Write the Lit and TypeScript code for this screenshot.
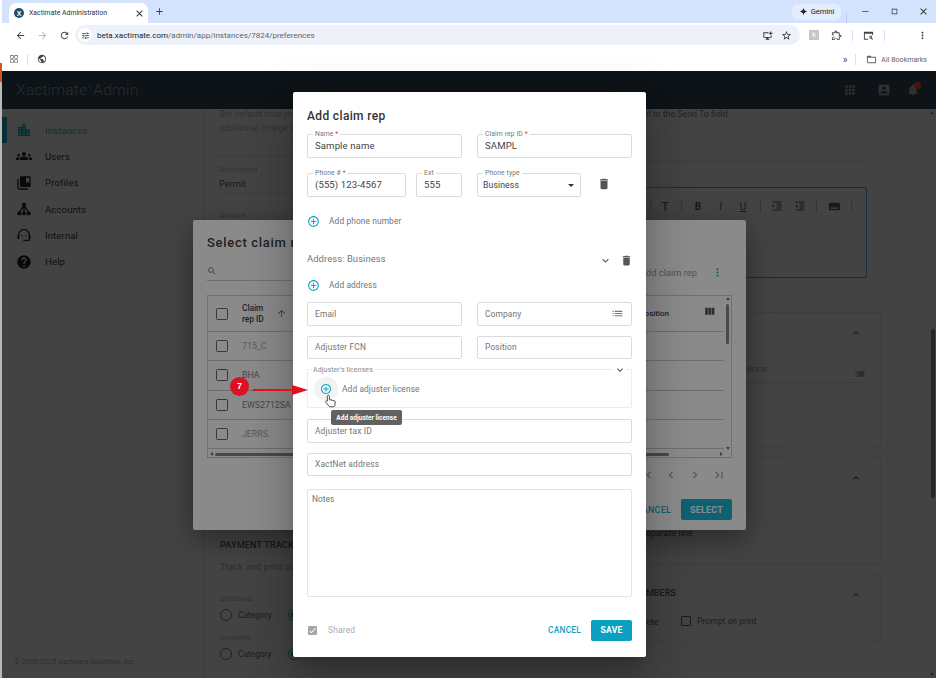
import { LitElement, html, css } from 'lit';
import { customElement } from 'lit/decorators.js';

const P = {
  trash: 'M6 19c0 1.1.9 2 2 2h8c1.1 0 2-.9 2-2V7H6v12zM19 4h-3.5l-1-1h-5l-1 1H5v2h14V4z',
  more: 'M16.59 8.59L12 13.17 7.41 8.59 6 10l6 6 6-6z',
  less: 'M12 8l-6 6 1.41 1.41L12 10.83l4.59 4.58L18 14z',
  add: 'M13 7h-2v4H7v2h4v4h2v-4h4v-2h-4V7zm-1-5C6.48 2 2 6.48 2 12s4.48 10 10 10 10-4.48 10-10S17.52 2 12 2zm0 18c-4.41 0-8-3.59-8-8s3.59-8 8-8 8 3.59 8 8-3.59 8-8 8z',
  list: 'M3 13h2v-2H3v2zm0 4h2v-2H3v2zm0-8h2V7H3v2zm4 4h14v-2H7v2zm0 4h14v-2H7v2zM7 7v2h14V7H7z',
  search: 'M15.5 14h-.79l-.28-.27A6.471 6.471 0 0 0 16 9.5 6.5 6.5 0 1 0 9.5 16c1.61 0 3.09-.59 4.23-1.57l.27.28v.79l5 4.99L20.49 19l-4.99-5zm-6 0C7.01 14 5 11.99 5 9.5S7.01 5 9.5 5 14 7.01 14 9.5 11.99 14 9.5 14z',
  apps: 'M4 8h4V4H4v4zm6 12h4v-4h-4v4zm-6 0h4v-4H4v4zm0-6h4v-4H4v4zm6 0h4v-4h-4v4zm6-10v4h4V4h-4zm-6 4h4V4h-4v4zm6 6h4v-4h-4v4zm0 6h4v-4h-4v4z',
  account: 'M3 5v14c0 1.1.89 2 2 2h14c1.1 0 2-.9 2-2V5c0-1.1-.9-2-2-2H5c-1.11 0-2 .9-2 2zm12 4c0 1.66-1.34 3-3 3s-3-1.34-3-3 1.34-3 3-3 3 1.34 3 3zm-9 8c0-2 4-3.1 6-3.1s6 1.1 6 3.1v1H6v-1z',
  bell: 'M12 22c1.1 0 2-.9 2-2h-4c0 1.1.89 2 2 2zm6-6v-5c0-3.07-1.64-5.64-4.5-6.32V4c0-.83-.67-1.5-1.5-1.5s-1.5.67-1.5 1.5v.68C7.63 5.36 6 7.92 6 11v5l-2 2v1h16v-1l-2-2z',
  city: 'M15 11V5l-3-3-3 3v2H3v14h18V11h-6zm-8 8H5v-2h2v2zm0-4H5v-2h2v2zm0-4H5V9h2v2zm6 8h-2v-2h2v2zm0-4h-2v-2h2v2zm0-4h-2V9h2v2zm0-4h-2V5h2v2zm6 12h-2v-2h2v2zm0-4h-2v-2h2v2z',
  groups: 'M12 12.75c1.63 0 3.07.39 4.24.9 1.08.48 1.76 1.56 1.76 2.73V18H6v-1.61c0-1.18.68-2.26 1.76-2.73 1.17-.52 2.61-.91 4.24-.91zM4 13c1.1 0 2-.9 2-2s-.9-2-2-2-2 .9-2 2 .9 2 2 2zm1.13 1.1c-.37-.06-.74-.1-1.13-.1-.99 0-1.93.21-2.78.58C.48 14.9 0 15.62 0 16.43V18h4.5v-1.61c0-.83.23-1.61.63-2.29zM20 13c1.1 0 2-.9 2-2s-.9-2-2-2-2 .9-2 2 .9 2 2 2zm4 3.43c0-.81-.48-1.53-1.22-1.85-.85-.37-1.79-.58-2.78-.58-.39 0-.76.04-1.13.1.4.68.63 1.46.63 2.29V18H24v-1.57zM12 6c1.66 0 3 1.34 3 3s-1.34 3-3 3-3-1.34-3-3 1.34-3 3-3z',
  profiles: 'M4 6H2v14c0 1.1.9 2 2 2h14v-2H4V6zM20 2H8c-1.1 0-2 .9-2 2v12c0 1.1.9 2 2 2h12c1.1 0 2-.9 2-2V4c0-1.1-.9-2-2-2zm0 10l-2.5-1.5L15 12V4h5v8z',
  accounts: 'M12 2.5a3.2 3.2 0 1 1 0 6.4 3.2 3.2 0 0 1 0-6.4zM5 15.5a3.2 3.2 0 1 1 0 6.4 3.2 3.2 0 0 1 0-6.4zM12 15.5a3.2 3.2 0 1 1 0 6.4 3.2 3.2 0 0 1 0-6.4zM19 15.5a3.2 3.2 0 1 1 0 6.4 3.2 3.2 0 0 1 0-6.4zM11 8h2v8h-2zM9.6 8.4l1.7 1-4.6 7-1.7-1zM14.4 8.4l-1.7 1 4.6 7 1.7-1z',
  internal: 'M21 12.22C21 6.73 16.74 3 12 3c-4.69 0-9 3.65-9 9.28-.6.34-1 .98-1 1.72v2c0 1.1.9 2 2 2h1v-6.1c0-3.87 3.13-7 7-7s7 3.13 7 7V19h-8v2h8c1.1 0 2-.9 2-2v-1.22c.59-.31 1-.92 1-1.62v-2.3c0-.7-.41-1.31-1-1.64zM9 12a1 1 0 1 1 0 2 1 1 0 0 1 0-2zm6 0a1 1 0 1 1 0 2 1 1 0 0 1 0-2z',
  help: 'M12 2C6.48 2 2 6.48 2 12s4.48 10 10 10 10-4.48 10-10S17.52 2 12 2zm1 17h-2v-2h2v2zm2.07-7.75l-.9.92C13.45 12.9 13 13.5 13 15h-2v-.5c0-1.1.45-2.1 1.17-2.83l1.24-1.26c.37-.36.59-.86.59-1.41 0-1.1-.9-2-2-2s-2 .9-2 2H8c0-2.21 1.79-4 4-4s4 1.79 4 4c0 .88-.36 1.68-.93 2.25z',
  columns: 'M10 18h5V5h-5v13zm-6 0h5V5H4v13zM16 5v13h5V5h-5z',
  dots: 'M12 8c1.1 0 2-.9 2-2s-.9-2-2-2-2 .9-2 2 .9 2 2 2zm0 2c-1.1 0-2 .9-2 2s.9 2 2 2 2-.9 2-2-.9-2-2-2zm0 6c-1.1 0-2 .9-2 2s.9 2 2 2 2-.9 2-2-.9-2-2-2z',
  up: 'M4 12l1.41 1.41L11 7.83V20h2V7.83l5.58 5.59L20 12l-8-8-8 8z',
  left: 'M15.41 7.41L14 6l-6 6 6 6 1.41-1.41L10.83 12z',
  right: 'M10 6L8.59 7.41 13.17 12l-4.58 4.59L10 18l6-6z',
  first: 'M18.41 16.59L13.82 12l4.59-4.59L17 6l-6 6 6 6zM6 6h2v12H6z',
  last: 'M5.59 7.41L10.18 12l-4.59 4.59L7 18l6-6-6-6zM16 6h2v12h-2z',
  indent: 'M3 21h18v-2H3v2zM3 8v8l4-4-4-4zm8 9h10v-2H11v2zM3 3v2h18V3H3zm8 6h10V7H11v2zm0 4h10v-2H11v2z',
  outdent: 'M11 17h10v-2H11v2zm-8-5l4 4V8l-4 4zm0 9h18v-2H3v2zM3 3v2h18V3H3zm8 6h10V7H11v2zm0 4h10v-2H11v2z',
  keyboard: 'M20 5H4c-1.1 0-2 .9-2 2v10c0 1.1.9 2 2 2h16c1.1 0 2-.9 2-2V7c0-1.1-.9-2-2-2zM5 14h14v2H5v-2z',
  back: 'M20 11H7.83l5.59-5.59L12 4l-8 8 8 8 1.41-1.41L7.83 13H20v-2z',
  forward: 'M12 4l-1.41 1.41L16.17 11H4v2h12.17l-5.58 5.59L12 20l8-8z',
  reload: 'M17.65 6.35A7.95 7.95 0 0 0 12 4C7.58 4 4 7.58 4 12s3.58 8 8 8c3.73 0 6.84-2.55 7.73-6h-2.08A5.99 5.99 0 0 1 12 18c-3.31 0-6-2.69-6-6s2.69-6 6-6c1.66 0 3.14.69 4.22 1.78L13 11h7V4l-2.35 2.35z',
  star: 'M22 9.24l-7.19-.62L12 2 9.19 8.63 2 9.24l5.46 4.73L5.82 21 12 17.27 18.18 21l-1.63-7.03L22 9.24zM12 15.4l-3.76 2.27 1-4.28-3.32-2.88 4.38-.38L12 6.1l1.71 4.04 4.38.38-3.32 2.88 1 4.28L12 15.4z',
  puzzle: 'M20.5 11H19V7c0-1.1-.9-2-2-2h-4V3.5a2.5 2.5 0 0 0-5 0V5H4c-1.1 0-2 .9-2 2v3.8h1.5a2.7 2.7 0 0 1 0 5.4H2V20c0 1.1.9 2 2 2h3.8v-1.5a2.7 2.7 0 0 1 5.4 0V22H17c1.1 0 2-.9 2-2v-4h1.5a2.5 2.5 0 0 0 0-5zm0 3H17v6h-2.1a4.7 4.7 0 0 0-8.8 0H4v-2.1a4.7 4.7 0 0 0 0-8.8V7h6V3.5a.5.5 0 0 1 1 0V7h6v6h3.5a.5.5 0 0 1 0 1z',
  folder: 'M20 6h-8l-2-2H4c-1.1 0-2 .9-2 2v12c0 1.1.9 2 2 2h16c1.1 0 2-.9 2-2V8c0-1.1-.9-2-2-2zm0 12H4V8h16v10z',
  spark: 'M12 2c.6 5.6 4.4 9.4 10 10-5.6.6-9.4 4.4-10 10-.6-5.6-4.4-9.4-10-10 5.6-.6 9.4-4.4 10-10z',
  close: 'M19 6.41L17.59 5 12 10.59 6.41 5 5 6.41 10.59 12 5 17.59 6.41 19 12 13.41 17.59 19 19 17.59 13.41 12z',
  plus: 'M19 13h-6v6h-2v-6H5v-2h6V5h2v6h6v2z',
  globe: 'M12 2C6.48 2 2 6.48 2 12s4.48 10 10 10 10-4.48 10-10S17.52 2 12 2zm-1 17.9A8 8 0 0 1 4.2 10.2L9 15v1c0 1.1.9 2 2 2v1.9zm6.9-2.5c-.3-.8-1-1.4-1.9-1.4h-1v-3c0-.55-.45-1-1-1H8v-2h2c.55 0 1-.45 1-1V7h2c1.1 0 2-.9 2-2v-.4a8 8 0 0 1 2.9 12.8z',
  tune: 'M3 17v2h6v-2H3zM3 5v2h10V5H3zm10 16v-2h8v-2h-8v-2h-2v6h2zM7 9v2H3v2h4v2h2V9H7zm14 4v-2H11v2h10zm-6-4h2V7h4V5h-4V3h-2v6z',
  install: 'M3 5h11v2H5v8h14v-3h2v3c0 1.1-.9 2-2 2h-5v2h2v2H8v-2h2v-2H5c-1.1 0-2-.9-2-2zM18 3h2v3h3v2h-3v3h-2V8h-3V6h3z',
  tabsearch: 'M3 4h18c.55 0 1 .45 1 1v6h-2V8H4v11h7v2H3c-.55 0-1-.45-1-1V5c0-.55.45-1 1-1zm13.5 8a3.5 3.5 0 0 1 2.9 5.45L22 20l-1.4 1.4-2.6-2.55A3.5 3.5 0 1 1 16.5 12zm0 2a1.5 1.5 0 1 0 0 3 1.5 1.5 0 0 0 0-3z',
};

const ic = (d: string, size = 14, cls = '') =>
  html`<svg class=${cls} width=${size} height=${size} viewBox="0 0 24 24" fill="currentColor"><path d=${d}></path></svg>`;

const NAV = [
  { label: 'Instances', d: P.city, active: true },
  { label: 'Users', d: P.groups },
  { label: 'Profiles', d: P.profiles },
  { label: 'Accounts', d: P.accounts },
  { label: 'Internal', d: P.internal },
  { label: 'Help', d: P.help },
];

const REPS = ['715_C', 'BHA', 'EWS2712SA', 'JERRS.'];

@customElement('app-root')
export class AppRoot extends LitElement {
  static styles = css`
    :host {
      display: block;
      width: 936px;
      height: 678px;
      overflow: hidden;
      font-family: Roboto, sans-serif;
      background: #fff;
    }
    svg { display: block; flex: none; }
    .screen { display: flex; height: 678px; }
    .sliver {
      width: 2px;
      flex: none;
      display: flex;
      flex-direction: column;
      background: #fff;
    }
    .sliver .gap { height: 63px; }
    .sliver .orange { height: 19px; background: #c9591e; }
    .sliver .rest { flex: 1; background: #b9b9b9; }
    .window { flex: 1; min-width: 0; display: flex; flex-direction: column; }

    /* browser chrome */
    .chrome { color: #3c4043; }
    .tabs {
      height: 23px;
      background: #d3e3fd;
      display: flex;
      align-items: flex-end;
      padding-left: 7px;
    }
    .tab {
      width: 139px;
      height: 20px;
      background: #fff;
      border-radius: 7px 7px 0 0;
      display: flex;
      align-items: center;
      padding: 0 3px 0 5px;
      box-sizing: border-box;
      font-size: 6.9px;
      color: #303134;
    }
    .favicon {
      width: 10px;
      height: 10px;
      border-radius: 50%;
      background: #1d4f6e;
      color: #fff;
      font: bold 7px 'Liberation Sans', sans-serif;
      display: flex;
      align-items: center;
      justify-content: center;
      margin-right: 5px;
      flex: none;
    }
    .tab span.t { flex: 1; white-space: nowrap; }
    .newtab { margin: 0 0 1px 6px; color: #444; align-self: center; padding-top: 1px; }
    .tabs .grow { flex: 1; }
    .gemini {
      align-self: center;
      height: 16px;
      width: 49px;
      border-radius: 6px;
      background: #e3edfd;
      display: flex;
      align-items: center;
      justify-content: center;
      gap: 3px;
      font-size: 7.6px;
      color: #222;
    }
    .vsep { width: 1px; height: 11px; background: #b5cdf5; flex: none; }
    .winbtns {
      align-self: center;
      display: flex;
      align-items: center;
      gap: 18px;
      padding: 0 7px 0 13px;
      color: #333;
    }
    .toolbar {
      height: 24px;
      background: #fff;
      display: flex;
      align-items: center;
      padding-left: 7px;
    }
    .navbtn { width: 22px; display: flex; justify-content: center; color: #444; }
    .navbtn.off { color: #b5b8bb; }
    .omni {
      width: 725px;
      height: 20px;
      background: #edf2fa;
      border-radius: 10px;
      display: flex;
      align-items: center;
      padding: 0 8px 0 3px;
      box-sizing: border-box;
      flex: none;
    }
    .tune {
      width: 14px;
      height: 14px;
      border-radius: 50%;
      background: #fff;
      display: flex;
      align-items: center;
      justify-content: center;
      margin-right: 5px;
    }
    .url { flex: 1; font-size: 8px; color: #5f6368; white-space: nowrap; }
    .url b { font-weight: 400; color: #202124; }
    .omni-icons { display: flex; gap: 8px; align-items: center; color: #333; }
    .tools { display: flex; align-items: center; margin-left: 9px; color: #444; }
    .ext {
      width: 10px;
      height: 10px;
      background: #c6c6c6;
      margin-right: 12px;
      color: #fff;
      font-size: 7px;
      text-align: center;
      line-height: 10px;
    }
    .tools .vsep { background: #d4e2f8; }
    .tools .a { margin-left: 10px; }
    .tools .b { margin: 0 10px; }
    .tools .c { margin-left: 32px; }
    .bookmarks {
      height: 24px;
      background: #fff;
      display: flex;
      align-items: center;
      padding-left: 7px;
      font-size: 7.1px;
      color: #5f6368;
    }
    .bookmarks .vsep { background: #d4e2f8; margin: 0 9px 0 8px; }
    .bookmarks .last { margin: 0 10px 0 8px; }
    .bookmarks .grow { flex: 1; }
    .ic-grid { color: #555; }
    .ic-globe { color: #444; }
    .chev2 { font-size: 10px; color: #555; }
    .bm-all { display: flex; align-items: center; gap: 4px; margin-right: 9px; white-space: nowrap; }

    /* underlying app, colours are chosen to land right under the two scrims */
    .app { position: relative; flex: 1; min-height: 0; display: flex; flex-direction: column; background: #e8e8e8; }
    .header {
      height: 38px;
      flex: none;
      background: #304152;
      display: flex;
      align-items: center;
      padding: 0 16px 0 14px;
      color: #8a9ba5;
      font-size: 15.5px;
      font-weight: 300;
      letter-spacing: .2px;
    }
    .header sup { font-size: 5px; margin: 0 1px; }
    .header .grow { flex: 1; }
    .head-icons { display: flex; align-items: center; gap: 14px; color: #aaa; }
    .head-icons .acc { margin-left: 6px; }
    .bell { position: relative; margin-left: 1px; }
    .bell i {
      position: absolute;
      width: 7px;
      height: 7px;
      right: -1px;
      top: -1px;
      border-radius: 50%;
      background: #ff4632;
    }
    .shell { flex: 1; min-height: 0; display: flex; }
    .sidebar {
      width: 202px;
      flex: none;
      box-sizing: border-box;
      border-right: 1px solid #ccc;
      padding-top: 8px;
      display: flex;
      flex-direction: column;
    }
    .nav {
      height: 26.3px;
      display: flex;
      align-items: center;
      padding-left: 14px;
      gap: 13px;
      font-size: 9.6px;
      color: #333;
      letter-spacing: .1px;
      flex: none;
    }
    .nav svg { color: #222; }
    .nav.active { color: #1fa0b8; box-shadow: inset 5px 0 0 #1fa0b8; }
    .nav.active svg { color: #1fa0b8; }
    .copy { margin-top: auto; padding: 0 0 12px 12px; font-size: 7.2px; color: #999; letter-spacing: .05px; }
    .content { flex: 1; min-width: 0; padding: 0 47px 0 15px; font-size: 9.2px; color: #555; }
    .top { height: 193px; box-sizing: border-box; }
    .intro { height: 14px; display: flex; justify-content: space-between; align-items: center; color: #aaa; position: relative; top: -2px; font-size: 9px; }
    .intro .r { margin-right: 151px; color: #777; font-size: 8.8px; }
    .topgrid { display: grid; grid-template-columns: 316px 1fr; gap: 8px; margin-right: 14px; }
    .mini { font-size: 7.6px; color: #aaa; }
    .leftcol { padding-top: 19px; }
    .leftcol .rule { border-bottom: 1px solid #ccc; }
    .leftcol .desc { margin-top: 8px; }
    .leftcol .val { font-size: 9.2px; color: #555; margin: 4px 0; padding-bottom: 4px; border-bottom: 1px solid #ccc; }
    .leftcol .amt { margin-top: 17px; }
    .rightcol { padding-top: 24px; }
    .rightcol .rule { border-bottom: 1px solid #ccc; }
    .editor {
      margin-top: 25px;
      height: 91px;
      border: 1px solid #3ab0c6;
      border-radius: 2px;
      box-sizing: border-box;
    }
    .edit-tools {
      display: flex;
      justify-content: flex-end;
      align-items: center;
      height: 36px;
      padding-right: 14px;
      color: #555;
      gap: 10.5px;
      font-size: 11px;
    }
    .edit-tools b, .edit-tools i, .edit-tools u { width: 12px; text-align: center; font-size: 10px; }
    .edit-tools .tt { font-size: 13px; margin-right: 1px; }
    .edit-tools .sep { width: 1px; height: 12px; background: #bbb; }
    .columns { display: grid; grid-template-columns: 1fr 321px; gap: 8px; margin-top: 10px; margin-left: -14px; }
    .col { display: flex; flex-direction: column; gap: 10px; }
    .card { border: 1px solid #d4d4d4; border-radius: 2px; box-sizing: border-box; position: relative; }
    .card .cv { position: absolute; right: 18px; color: #555; }
    .leftcard { margin-top: 218px; padding: 10px 15px; border: none; height: 130px; }
    .sect { font-size: 9.1px; font-weight: 500; color: #555; letter-spacing: .15px; white-space: nowrap; }
    .muted { color: #999; font-size: 9.2px; letter-spacing: .15px; margin: 11px 0 22px; white-space: nowrap; }
    .mini.tight { margin-bottom: 6px; }
    .radios { display: flex; align-items: center; font-size: 8.4px; color: #666; margin-bottom: 12px; }
    .radio { width: 10px; height: 10px; border: 1px solid #777; border-radius: 50%; margin-right: 6px; flex: none; }
    .radio.on { border-color: #1fa0b8; background: radial-gradient(circle, #1fa0b8 0 3px, transparent 3.5px); margin-left: 16px; margin-right: 0; }
    .c2 { height: 135px; }
    .c2 .cv { top: 14px; }
    .c2 .f { position: absolute; left: 14px; right: 14px; top: 50px; height: 19px; border-bottom: 1px solid #ccc; color: #999; font-size: 9.2px; display: flex; justify-content: space-between; }
    .c2 .f span { margin-left: 172px; }
    .c2 .f svg { margin-top: 5px; color: #555; }
    .c3 { height: 107px; }
    .c3 .cv { top: 14px; }
    .c3 .t { position: absolute; left: 85px; top: 70px; white-space: nowrap; color: #666; font-size: 9px; }
    .c4 { height: 68px; }
    .c4 .cv { top: 14px; }
    .c4 .t1 { position: absolute; left: 85px; top: 13px; white-space: nowrap; font-weight: 500; font-size: 9px; color: #555; }
    .c4 .t0 { position: absolute; left: 85px; top: 41px; color: #666; white-space: nowrap; }
    .c4 .t2 { position: absolute; left: 120px; top: 41px; display: flex; align-items: center; gap: 6px; white-space: nowrap; color: #666; font-size: 8.6px; }
    .box { width: 8px; height: 8px; border: 1px solid #666; border-radius: 1px; flex: none; }
    .pagescroll { width: 8px; flex: none; position: relative; }
    .pagescroll .thumb { position: absolute; left: 3px; right: 1px; top: 220px; height: 169px; background: #888; border-radius: 2px; }
    .tri { position: absolute; width: 0; height: 0; border: 2px solid transparent; }
    .tri.u { border-top: none; border-bottom: 3px solid #777; }
    .tri.d { border-bottom: none; border-top: 3px solid #777; }
    .tri.l { border-left: none; border-right: 3px solid #777; }
    .tri.r { border-right: none; border-left: 3px solid #777; }
    .pagescroll .u { top: 2px; left: 2px; }
    .pagescroll .d { bottom: 2px; left: 2px; }

    /* scrims and dialogs */
    .scrim { position: absolute; inset: 0; background: rgba(0, 0, 0, .46); }
    .select {
      position: absolute;
      left: 191px;
      top: 149px;
      width: 553px;
      height: 310px;
      background: #fff;
      border-radius: 2px;
      box-sizing: border-box;
      padding: 14px;
      display: flex;
      flex-direction: column;
      box-shadow: 0 9px 30px rgba(0, 0, 0, .4);
    }
    .select h2 { margin: 0; font-size: 13px; font-weight: 500; color: #404040; letter-spacing: .7px; line-height: 18px; white-space: nowrap; flex: none; }
    .select .searchrow {
      margin-top: 9px;
      height: 20px;
      flex: none;
      display: flex;
      align-items: center;
      color: #777;
      border-bottom: 1px solid #ccc;
      margin-right: 440px;
      font-size: 9.5px;
      box-sizing: border-box;
    }
    .select .bar-right {
      position: absolute;
      right: 22px;
      top: 46px;
      display: flex;
      align-items: center;
      gap: 14px;
      font-size: 9.3px;
      color: #999;
    }
    .select .bar-right svg { color: #1ab4d0; }
    .table {
      margin-top: 14px;
      height: 163px;
      border: 1px solid #d0d0d0;
      box-sizing: border-box;
      display: flex;
      flex-direction: column;
      position: relative;
      flex: none;
    }
    .thead, .trow { display: flex; align-items: center; margin-right: 7px; border-bottom: 1px solid #ccc; padding-left: 8px; flex: none; box-sizing: border-box; }
    .thead { height: 36px; font-size: 8.3px; font-weight: 500; color: #3a4060; line-height: 11px; }
    .trow { height: 29.3px; font-size: 8.8px; color: #a6a6a6; }
    .trow.dark { color: #828282; }
    .cb { width: 10px; height: 10px; border: 1.5px solid #666; border-radius: 1.5px; margin-right: 14px; flex: none; }
    .thead .id { width: 34px; }
    .thead svg.sort { color: #777; margin-right: auto; }
    .thead .pos { margin-right: 34px; font-size: 8px; }
    .thead svg.colsel { margin-right: 8px; margin-top: -4px; color: #555; }
    .hscroll { position: absolute; left: 7px; right: 62px; bottom: 1px; height: 3px; background: #888; border-radius: 2px; }
    .vscroll { position: absolute; right: 2px; top: 8px; width: 3px; height: 40px; background: #888; border-radius: 2px; }
    .table .u { top: 1px; right: 1px; }
    .table .d { bottom: 7px; right: 1px; }
    .table .l { bottom: 1px; left: 2px; }
    .table .r { bottom: 1px; right: 8px; }
    .pager { display: flex; justify-content: flex-end; gap: 10px; margin-top: 10px; padding-right: 6px; color: #999; flex: none; }
    .sel-actions { margin-top: 17px; display: flex; justify-content: flex-end; align-items: center; gap: 10px; font-size: 9px; font-weight: 500; letter-spacing: .2px; color: #1ab4d0; flex: none; }
    .sel-btn { width: 51px; height: 21px; border-radius: 2px; background: #1ab4d0; color: #fff; display: flex; align-items: center; justify-content: center; font-weight: 700; }

    .dialog {
      position: absolute;
      left: 291px;
      top: 21px;
      width: 353px;
      height: 565px;
      background: #fff;
      border-radius: 2px;
      box-sizing: border-box;
      padding: 14px;
      display: flex;
      flex-direction: column;
      box-shadow: 0 11px 15px -7px rgba(0,0,0,.2), 0 24px 38px 3px rgba(0,0,0,.14), 0 9px 46px 8px rgba(0,0,0,.12);
      color: #333;
    }
    .dialog h2 { margin: 1px 0 0; height: 18px; font-size: 12px; line-height: 18px; font-weight: 500; color: #333; letter-spacing: .35px; flex: none; }
    .row { display: flex; flex: none; }
    .field {
      position: relative;
      height: 23.5px;
      border: 1px solid #dcdcdc;
      border-radius: 2px;
      box-sizing: border-box;
      display: flex;
      align-items: center;
      padding: 0 7px;
      font-size: 9.6px;
      color: #444;
      letter-spacing: .1px;
      flex: none;
    }
    .w155 { width: 155px; }
    .w99 { width: 99px; margin-right: 10px; }
    .w46 { width: 46px; margin-right: 15px; }
    .w104 { width: 104px; height: 24px; padding: 0 6px 0 5px; font-size: 8.7px; justify-content: space-between; }
    .wfull { width: 325px; }
    .mr15 { margin-right: 15px; }
    .field label {
      position: absolute;
      left: 5px;
      top: -5px;
      padding: 0 2px;
      background: #fff;
      font-size: 6.8px;
      line-height: 8px;
      color: #777;
      letter-spacing: .1px;
    }
    .field label em { color: #e53935; font-style: normal; }
    .ph { font-size: 8.4px; color: #757575; letter-spacing: .15px; justify-content: space-between; }
    .caret { width: 0; height: 0; border: 3.5px solid transparent; border-top: 3.5px solid #333; margin-top: 4px; }
    .trash { color: #555; margin: 4px 0 0 16px; }
    .adder { height: 22px; align-items: center; gap: 9px; font-size: 8.4px; color: #757575; letter-spacing: .1px; }
    .adder svg { color: #13a7c9; }
    .addr { height: 24px; align-items: center; color: #757575; font-size: 9.4px; letter-spacing: .1px; }
    .addr .txt { margin-top: -4px; }
    .addr .grow { flex: 1; }
    .addr svg { color: #555; }
    .addr .cv { margin-right: 8px; }
    .addr .tr { margin-right: -1px; }
    .lic {
      position: relative;
      width: 325px;
      height: 39px;
      border: 1px solid #ececec;
      border-radius: 2px;
      box-sizing: border-box;
      display: flex;
      align-items: center;
      flex: none;
      padding-left: 6px;
      gap: 4px;
      font-size: 8.4px;
      letter-spacing: .1px;
      color: #757575;
    }
    .lic > label { position: absolute; left: 4px; top: -4px; padding: 0 1px; background: #fff; font-size: 7px; line-height: 8px; color: #888; letter-spacing: .1px; }
    .lic .cv { position: absolute; right: 5px; top: -6px; color: #555; background: #fff; }
    .halo { width: 24px; height: 24px; border-radius: 50%; background: #f2f2f2; display: flex; align-items: center; justify-content: center; color: #13a7c9; flex: none; margin-top: 1px; }
    .lic span.tx { margin-top: 1px; }
    .tooltip {
      position: absolute;
      left: 23px;
      top: 40px;
      width: 71px;
      height: 15px;
      background: #616161;
      border-radius: 2px;
      color: #fff;
      font-size: 6.6px;
      font-weight: 700;
      display: flex;
      align-items: center;
      justify-content: center;
      letter-spacing: 0;
      white-space: nowrap;
      z-index: 2;
    }
    .cursor { position: absolute; left: 17px; top: 24px; z-index: 3; }
    .notes {
      width: 325px;
      height: 107.5px;
      border: 1px solid #e4e4e4;
      border-radius: 2px;
      box-sizing: border-box;
      padding: 4px 4px;
      font-size: 8.4px;
      color: #757575;
      flex: none;
    }
    .foot { height: 21px; align-items: center; font-size: 8.4px; }
    .shared { width: 9px; height: 9px; background: #a6a6a6; border-radius: 1px; color: #fff; margin: 0 11px 0 1px; display: flex; align-items: center; justify-content: center; }
    .foot .lbl { color: #aaa; letter-spacing: .2px; flex: 1; }
    .foot .cancel { color: #13a0c0; font-weight: 500; font-size: 8.4px; letter-spacing: .2px; margin-right: 10px; }
    .foot .save { width: 41px; height: 21px; background: #0ba0c1; border-radius: 2px; color: #fff; font-weight: 700; font-size: 8.6px; letter-spacing: .2px; display: flex; align-items: center; justify-content: center; }
    .mt9 { margin-top: 9px; } .mt10 { margin-top: 10px; } .mt16 { margin-top: 16px; } .mt15 { margin-top: 15.5px; } .mt13 { margin-top: 13px; }
    .mt2 { margin-top: 2px; } .mt6 { margin-top: 6px; } .mt11 { margin-top: 11px; } .mt23 { margin-top: 23px; }

    /* annotation */
    .callout { position: absolute; left: 228px; top: 305.5px; display: flex; align-items: flex-start; }
    .badge { width: 19px; height: 19px; border-radius: 50%; background: #dd1122; color: #fff; font: 700 9px 'Liberation Sans', sans-serif; display: flex; align-items: center; justify-content: center; }
    .arrow { margin: 7px 0 0 3px; }
  `;

  private field(label: string, value: string, req: boolean, cls: string) {
    return html`<div class="field ${cls}">
      <label>${label}${req ? html` <em>*</em>` : ''}</label>${value}
    </div>`;
  }

  private placeholder(text: string, cls: string, end: unknown = '') {
    return html`<div class="field ph ${cls}"><span>${text}</span>${end}</div>`;
  }

  private renderChrome() {
    return html`<div class="chrome">
      <div class="tabs">
        <div class="tab">
          <span class="favicon">X</span>
          <span class="t">Xactimate Administration</span>
          ${ic(P.close, 11)}
        </div>
        <span class="newtab">${ic(P.plus, 11)}</span>
        <span class="grow"></span>
        <div class="gemini">${ic(P.spark, 9)}Gemini</div>
        <span class="vsep" style="margin-left:5px"></span>
        <div class="winbtns">
          ${ic('M5 11h14v1.5H5z', 11)}
          ${ic('M6 6h12v12H6zm1.5 1.5v9h9v-9z', 11)}
          ${ic(P.close, 11)}
        </div>
      </div>
      <div class="toolbar">
        <span class="navbtn">${ic(P.back, 11)}</span>
        <span class="navbtn off">${ic(P.forward, 11)}</span>
        <span class="navbtn">${ic(P.reload, 11)}</span>
        <div class="omni">
          <span class="tune">${ic(P.tune, 9)}</span>
          <span class="url"><b>beta.xactimate.com</b>/admin/app/instances/7824/preferences</span>
          <span class="omni-icons">${ic(P.install, 11)}${ic(P.star, 11)}</span>
        </div>
        <div class="tools">
          <span class="ext">k</span>
          ${ic(P.puzzle, 11)}
          <span class="vsep a"></span>
          <span class="b">${ic(P.tabsearch, 11)}</span>
          <span class="vsep"></span>
          <span class="c">${ic(P.dots, 11)}</span>
        </div>
      </div>
      <div class="bookmarks">
        <span class="ic-grid">${ic('M3 3h8v8H3zm1.5 1.5v5h5v-5zM13 3h8v8h-8zm1.5 1.5v5h5v-5zM3 13h8v8H3zm1.5 1.5v5h5v-5zM13 13h8v8h-8zm1.5 1.5v5h5v-5z', 10)}</span>
        <span class="vsep"></span>
        <span class="ic-globe">${ic(P.globe, 10)}</span>
        <span class="grow"></span>
        <span class="chev2">»</span>
        <span class="vsep last"></span>
        <span class="bm-all">${ic(P.folder, 11)}All Bookmarks</span>
      </div>
    </div>`;
  }

  private renderBackground() {
    return html`
      <div class="header">
        <span>Xactimate<sup>®</sup>Admin</span>
        <span class="grow"></span>
        <div class="head-icons">
          ${ic(P.apps, 14)}
          <span class="acc">${ic(P.account, 14)}</span>
          <span class="bell">${ic(P.bell, 14)}<i></i></span>
        </div>
      </div>
      <div class="shell">
        <nav class="sidebar">
          ${NAV.map(
            (n) => html`<div class="nav ${n.active ? 'active' : ''}">${ic(n.d, 16)}<span>${n.label}</span></div>`
          )}
          <div class="copy">© 2005-2025 Xactware Solutions, Inc.</div>
        </nav>
        <div class="content">
          <div class="top">
            <div class="intro"><span>Set default charges</span><span class="r">il to the Send To field.</span></div>
            <div class="intro"><span>additional charge i</span></div>
            <div class="topgrid">
              <div class="leftcol">
                <div class="rule"></div>
                <div class="mini desc">Description</div>
                <div class="val">Permit</div>
                <div class="mini amt">Amount</div>
              </div>
              <div class="rightcol">
                <div class="rule"></div>
                <div class="editor">
                  <div class="edit-tools">
                    <span class="sep"></span><span class="tt">T</span><span class="sep"></span>
                    <b>B</b><i>I</i><u>U</u><span class="sep"></span>
                    ${ic(P.indent, 12)}${ic(P.outdent, 12)}<span class="sep"></span>
                    ${ic(P.keyboard, 13)}<span class="sep"></span>
                  </div>
                </div>
              </div>
            </div>
          </div>
          <div class="columns">
            <div class="col">
              <div class="card leftcard">
                <div class="sect">PAYMENT TRACKE</div>
                <div class="muted">Track and print pay</div>
                <div class="mini tight">Structural</div>
                <div class="radios"><span class="radio"></span>Category<span class="radio on"></span></div>
                <div class="mini tight">Contents</div>
                <div class="radios"><span class="radio"></span>Category<span class="radio on"></span></div>
              </div>
            </div>
            <div class="col">
              <div class="card c2">
                ${ic(P.less, 12, 'cv')}
                <div class="f"><span>ence</span>${ic(P.list, 12)}</div>
              </div>
              <div class="card c3">
                ${ic(P.less, 12, 'cv')}
                <div class="t">eparate line</div>
              </div>
              <div class="card c4">
                ${ic(P.less, 12, 'cv')}
                <div class="t1">MBERS</div>
                <div class="t0">ete</div>
                <div class="t2"><span class="box"></span>Prompt on print</div>
              </div>
            </div>
          </div>
        </div>
        <div class="pagescroll">
          <span class="tri u"></span>
          <div class="thumb"></div>
          <span class="tri d"></span>
        </div>
      </div>`;
  }

  private renderSelect() {
    return html`<div class="select">
      <h2>Select claim re</h2>
      <div class="searchrow">${ic(P.search, 10)}</div>
      <div class="bar-right"><span>Add claim rep</span>${ic(P.dots, 13)}</div>
      <div class="table">
        <div class="thead">
          <span class="cb"></span>
          <span class="id">Claim<br />rep ID</span>
          ${ic(P.up, 11, 'sort')}
          <span class="pos">osition</span>
          ${ic(P.columns, 13, 'colsel')}
        </div>
        ${REPS.map((r, i) => html`<div class="trow ${i === 1 || i === 2 ? 'dark' : ''}"><span class="cb"></span>${r}</div>`)}
        <span class="tri u"></span>
        <span class="tri d"></span>
        <span class="tri l"></span>
        <span class="tri r"></span>
        <div class="hscroll"></div>
        <div class="vscroll"></div>
      </div>
      <div class="pager">
        ${ic(P.first, 14)}${ic(P.left, 14)}${ic(P.right, 14)}${ic(P.last, 14)}
      </div>
      <div class="sel-actions"><span>ANCEL</span><span class="sel-btn">SELECT</span></div>
    </div>`;
  }

  private renderDialog() {
    return html`<div class="dialog">
      <h2>Add claim rep</h2>
      <div class="row mt9">
        ${this.field('Name', 'Sample name', true, 'w155 mr15')}
        ${this.field('Claim rep ID', 'SAMPL', true, 'w155')}
      </div>
      <div class="row mt15">
        ${this.field('Phone #', '(555) 123-4567', true, 'w99')}
        ${this.field('Ext', '555', false, 'w46')}
        <div class="field w104"><label>Phone type</label>Business<span class="caret"></span></div>
        ${ic(P.trash, 14, 'trash')}
      </div>
      <div class="row adder mt13">${ic(P.add, 13)}<span>Add phone number</span></div>
      <div class="row addr mt16">
        <span class="txt">Address: Business</span><span class="grow"></span>
        ${ic(P.more, 13, 'cv')}${ic(P.trash, 13, 'tr')}
      </div>
      <div class="row adder mt2">${ic(P.add, 13)}<span>Add address</span></div>
      <div class="row mt6">
        ${this.placeholder('Email', 'w155 mr15')}
        ${this.placeholder('Company', 'w155', ic(P.list, 13))}
      </div>
      <div class="row mt10">
        ${this.placeholder('Adjuster FCN', 'w155 mr15')}
        ${this.placeholder('Position', 'w155')}
      </div>
      <div class="lic mt10">
        <label>Adjuster's licenses</label>
        ${ic(P.more, 12, 'cv')}
        <span class="halo">${ic(P.add, 12)}</span>
        <span class="tx">Add adjuster license</span>
        <svg class="cursor" width="11" height="14" viewBox="0 0 13 16">
          <path d="M4 1.2c.7 0 1.2.5 1.2 1.2v4.2l1-.1 5 1.3c.6.2 1 .7.9 1.4l-.5 4.2c-.1.8-.8 1.4-1.6 1.4H6c-.5 0-1-.3-1.3-.7L1 9.6c-.4-.6-.2-1.3.4-1.6.5-.3 1-.2 1.4.2V2.4c0-.7.5-1.2 1.2-1.2z" fill="#fff" stroke="#333" stroke-width="1"></path>
        </svg>
        <div class="tooltip">Add adjuster license</div>
      </div>
      <div class="row mt11">${this.placeholder('Adjuster tax ID', 'wfull')}</div>
      <div class="row mt10">${this.placeholder('XactNet address', 'wfull')}</div>
      <div class="notes mt13">Notes</div>
      <div class="row foot mt23">
        <span class="shared">${ic('M9 16.2L4.8 12l-1.4 1.4L9 19 21 7l-1.4-1.4z', 9)}</span>
        <span class="lbl">Shared</span>
        <span class="cancel">CANCEL</span>
        <span class="save">SAVE</span>
      </div>
    </div>`;
  }

  render() {
    return html`<div class="screen">
      <div class="sliver"><div class="gap"></div><div class="orange"></div><div class="rest"></div></div>
      <div class="window">
        ${this.renderChrome()}
        <div class="app">
          ${this.renderBackground()}
          <div class="scrim"></div>
          ${this.renderSelect()}
          <div class="scrim"></div>
          ${this.renderDialog()}
          <div class="callout">
            <span class="badge">7</span>
            <svg class="arrow" width="56" height="12" viewBox="0 0 56 12">
              <path d="M1 5H40V1L56 6 40 11V7H1z" fill="#e3101c"></path>
            </svg>
          </div>
        </div>
      </div>
    </div>`;
  }
}
